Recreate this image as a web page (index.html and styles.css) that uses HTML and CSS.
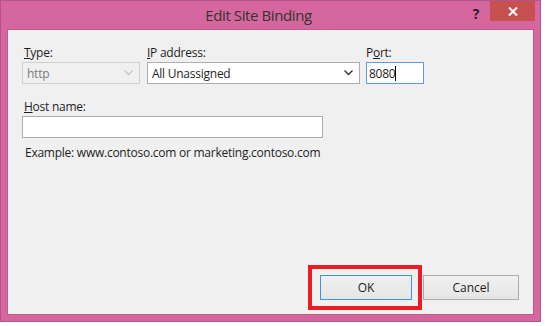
FILE: index.html
```html
<!DOCTYPE html>
<html lang="en">
<head>
  <meta charset="UTF-8" />
  <title>Edit Site Binding</title>
  <link rel="stylesheet" href="styles.css">
</head>
<body>

  <div class="window">
    <div class="titlebar">
      <div class="title">Edit Site Binding</div>
      <div class="help">?</div>
      <div class="close">
        <svg width="10" height="9" viewBox="0 0 10 9">
          <path d="M1 0.5 L9 8.5 M9 0.5 L1 8.5" stroke="#fff" stroke-width="2"/>
        </svg>
      </div>
    </div>

    <div class="panel">
      <div class="row-top">
        <div class="field type">
          <label><u>T</u>ype:</label>
          <div class="box select disabled">
            <span>http</span>
            <svg class="chev" width="9" height="6" viewBox="0 0 9 6"><path d="M0.5 0.5 L4.5 4.5 L8.5 0.5" fill="none" stroke="#c6c6c6" stroke-width="1.4"/></svg>
          </div>
        </div>
        <div class="field ip">
          <label><u>I</u>P address:</label>
          <div class="box select">
            <span>All Unassigned</span>
            <svg class="chev" width="9" height="6" viewBox="0 0 9 6"><path d="M0.5 0.5 L4.5 4.5 L8.5 0.5" fill="none" stroke="#333" stroke-width="1.4"/></svg>
          </div>
        </div>
        <div class="field port">
          <label>P<u>o</u>rt:</label>
          <div class="box focus"><span>8080</span><i class="caret"></i></div>
        </div>
      </div>

      <div class="field host">
        <label><u>H</u>ost name:</label>
        <div class="box"></div>
      </div>
      <p class="example">Example: www.contoso.com or marketing.contoso.com</p>

      <div class="buttons">
        <div class="highlight">
          <button class="btn default">OK</button>
        </div>
        <button class="btn">Cancel</button>
      </div>
    </div>
  </div>

</body>
</html>
```

FILE: styles.css
```css
body {
  margin: 0;
  background: #fff;
  font-family: "Open Sans", "Noto Sans", sans-serif;
  font-size: 12px;
  letter-spacing: -0.25px;
  color: #1e1e1e;
}

.window {
  width: 539px;
  height: 320px;
  background: #d6679e;
  border: 1px solid #b3558a;
  display: flex;
  flex-direction: column;
}

.titlebar {
  height: 28px;
  display: flex;
  align-items: flex-start;
}

.title {
  flex: 1;
  text-align: center;
  padding-left: 50px;
  padding-top: 4px;
  font-size: 15px;
  letter-spacing: -0.4px;
  color: #333;
}

.help {
  width: 20px;
  margin-right: 4px;
  padding-top: 3px;
  font-weight: bold;
  font-size: 14px;
  color: #222;
  text-align: center;
}

.close {
  width: 45px;
  height: 20px;
  margin-right: 5px;
  background: #c75050;
  display: flex;
  align-items: center;
  justify-content: center;
}

.panel {
  flex: 1;
  margin: 0 6px 6px;
  background: #f0f0f0;
  border: 1px solid #c05a8e;
  padding: 14px 0 0 14px;
  display: flex;
  flex-direction: column;
}

.row-top {
  display: flex;
}

.field label {
  display: block;
  height: 18px;
  padding-left: 2px;
}

.ip label,
.port label {
  padding-left: 0;
}

.box {
  height: 20px;
  border: 1px solid #abadb3;
  background: #fff;
  display: flex;
  align-items: center;
  padding: 0 4px;
}

.select {
  justify-content: space-between;
  padding-right: 6px;
}

.disabled {
  background: #f0f0f0;
  border-color: #d0d0d0;
  color: #7a7a7a;
}

.focus {
  border-color: #5c9ce2;
  padding-left: 2px;
}

.caret {
  width: 1px;
  height: 15px;
  background: #000;
}

.type .box { width: 106px; }
.type { margin-right: 7px; }
.ip .box { width: 201px; }
.ip { margin-right: 6px; }
.port .box { width: 50px; }

.host {
  margin-top: 14px;
}

.host .box {
  width: 291px;
  height: 20px;
}

.example {
  margin: 6px 0 0 3px;
}

.buttons {
  margin-top: auto;
  margin-bottom: 4px;
  margin-right: 14px;
  display: flex;
  justify-content: flex-end;
  align-items: center;
}

.highlight {
  border: 4px solid #ec1c24;
  padding: 6px 6px 6px 8px;
  margin-right: 1px;
}

.btn {
  width: 96px;
  height: 25px;
  border: 1px solid #acacac;
  background: linear-gradient(#f0f0f0, #e5e5e5);
  font-family: "Open Sans", "Noto Sans", sans-serif;
  font-size: 12px;
  color: #1e1e1e;
  padding: 0;
}

.default {
  width: 92px;
  border-color: #3c93e6;
}
```
